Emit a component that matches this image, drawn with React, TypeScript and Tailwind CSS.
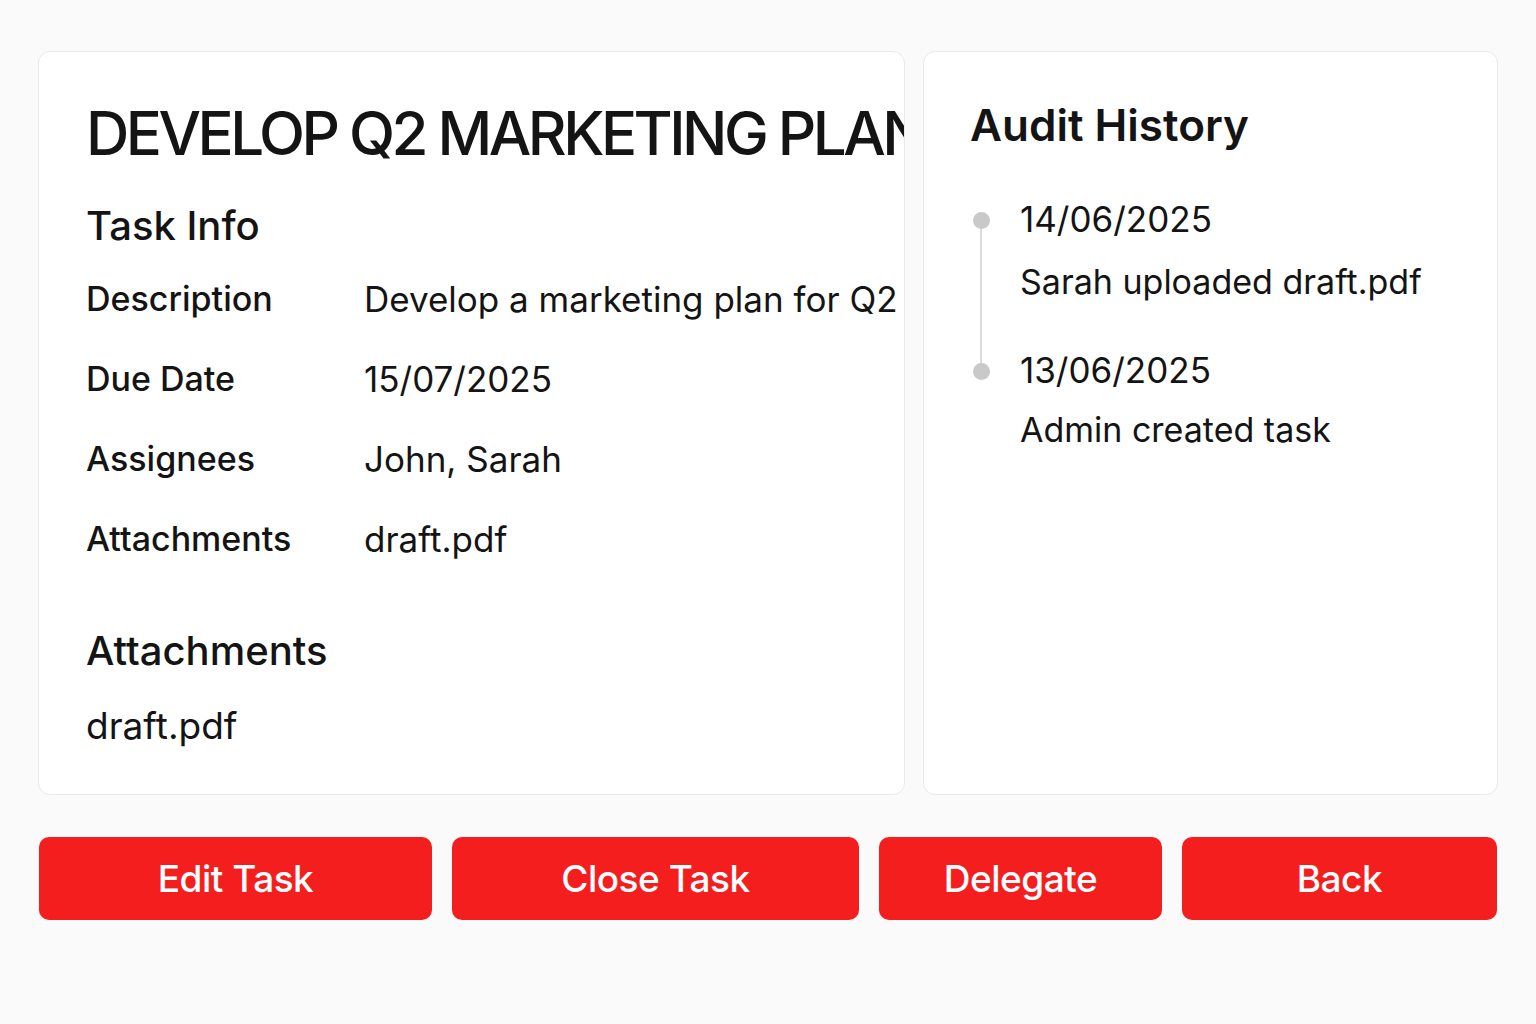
import React from 'react'

const INFO = [
  { label: 'Description', value: 'Develop a marketing plan for Q2' },
  { label: 'Due Date', value: '15/07/2025' },
  { label: 'Assignees', value: 'John, Sarah' },
  { label: 'Attachments', value: 'draft.pdf' },
]

const AUDIT = [
  { date: '14/06/2025', text: 'Sarah uploaded draft.pdf' },
  { date: '13/06/2025', text: 'Admin created task' },
]

const ACTIONS = [
  { label: 'Edit Task', w: 'w-[393px]' },
  { label: 'Close Task', w: 'w-[407px]' },
  { label: 'Delegate', w: 'w-[283px]' },
  { label: 'Back', w: 'w-[315px]' },
]

export default function App() {
  return (
    <div className="min-h-screen w-full bg-[#fafafa] px-[38px] pt-[51px] text-[#141414]" style={{ fontFamily: 'Inter, "Noto Sans", sans-serif' }}>
      <div className="flex gap-[18px]">
        {/* ── Task card ── */}
        <div className="w-[867px] h-[744px] overflow-hidden rounded-[12px] border border-[#e9e9e9] bg-white pl-[47px] pt-[51px]">
          <h1 className="whitespace-nowrap text-[60px] font-medium leading-none tracking-[-3.5px]">DEVELOP Q2 MARKETING PLAN</h1>

          <h2 className="mt-[43px] text-[40px] font-medium leading-none">Task Info</h2>

          <div className="mt-[13px]">
            {INFO.map(r => (
              <div key={r.label} className="flex h-[80px] items-center text-[35px] leading-none">
                <span className="w-[278px] shrink-0 text-[34px] font-medium">{r.label}</span>
                <span className="whitespace-nowrap">{r.value}</span>
              </div>
            ))}
          </div>

          <h2 className="mt-[52px] text-[40px] font-medium leading-none">Attachments</h2>
          <p className="mt-[36px] text-[37px] leading-none">draft.pdf</p>
        </div>

        {/* ── Audit card ── */}
        <div className="w-[575px] h-[744px] rounded-[12px] border border-[#e9e9e9] bg-white pl-[46px] pt-[51px]">
          <h2 className="text-[44px] font-semibold leading-none">Audit History</h2>

          <div className="relative mt-[55px]">
            <div className="absolute left-[10px] top-[18px] h-[152px] w-[2px] bg-[#dcdcdc]" />
            {AUDIT.map((a, i) => (
              <div key={a.date} className={`flex ${i > 0 ? 'mt-[54px]' : ''}`}>
                <div className="relative w-[50px] shrink-0">
                  <span className="absolute left-[3px] top-[10px] h-[17px] w-[17px] rounded-full bg-[#c9c9c9]" />
                </div>
                <div>
                  <p className="text-[35px] leading-none">{a.date}</p>
                  <p className={`${i === 0 ? 'mt-[28px]' : 'mt-[25px]'} text-[34px] leading-none whitespace-nowrap`}>{a.text}</p>
                </div>
              </div>
            ))}
          </div>
        </div>
      </div>

      {/* ── Actions ── */}
      <div className="mt-[42px] flex gap-[20px] pl-px">
        {ACTIONS.map(b => (
          <button key={b.label} className={`${b.w} h-[83px] rounded-[10px] bg-[#f41e1f] text-[37px] font-medium tracking-[-0.5px] text-white`}>
            {b.label}
          </button>
        ))}
      </div>
    </div>
  )
}
